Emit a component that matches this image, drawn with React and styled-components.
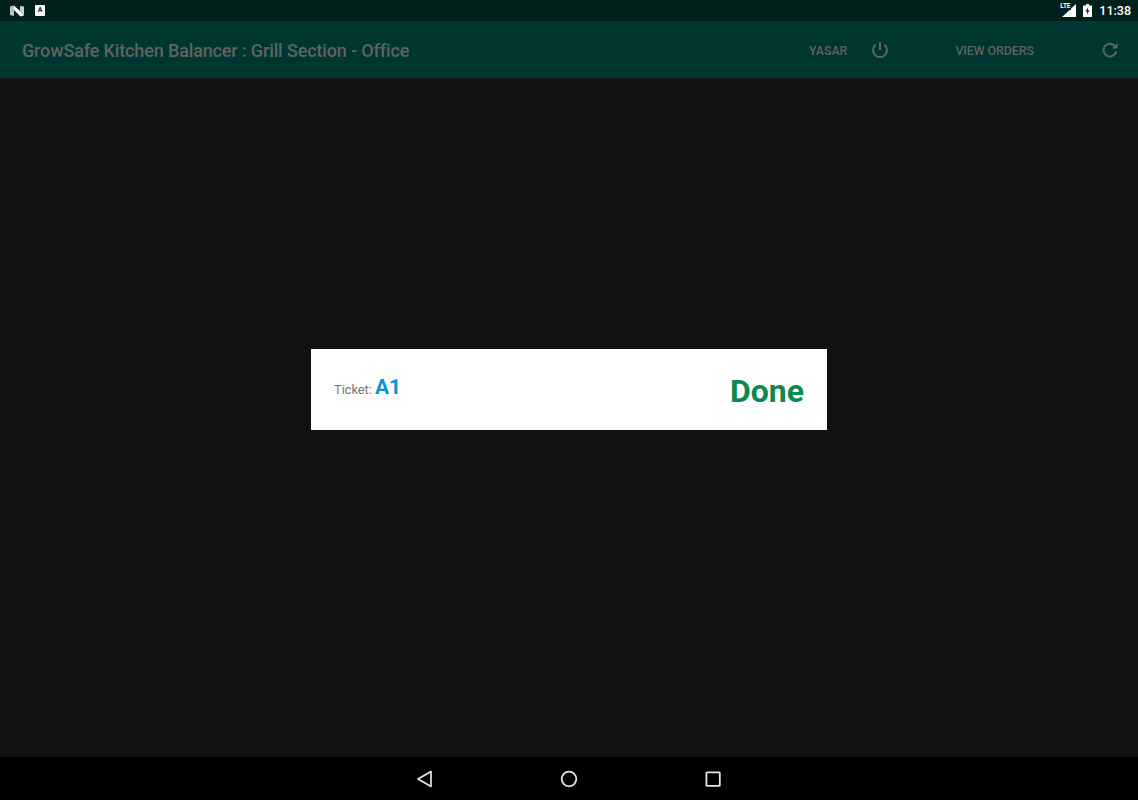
import React from "react";
import styled, { createGlobalStyle } from "styled-components";

const GlobalStyle = createGlobalStyle`
  html, body {
    margin: 0;
    padding: 0;
    height: 100%;
    background: #111111;
  }
  #root {
    height: 100%;
  }
`;

const App = () => {
  return (
    <>
      <GlobalStyle />
      <Screen>
        <StatusBar>
          <StatusIcons>
            <svg width="14" height="12" viewBox="0 0 14 12">
              <path d="M0 1.5 L4 0.5 L4 11 L0 10 Z" fill="#b9c2bf" />
              <path d="M4 0.5 L10 6 L14 10.5 L10.5 11.5 L4 5 Z" fill="#ffffff" />
              <path d="M10 1 L14 1.5 L14 10.5 L10 6 Z" fill="#c9d0ce" />
            </svg>
            <NotifyBadge>A</NotifyBadge>
          </StatusIcons>
          <StatusIcons>
            <SignalWrap>
              <LteTag>LTE</LteTag>
              <svg width="14" height="13" viewBox="0 0 14 13">
                <path d="M14 0 V13 H0 Z" fill="#ffffff" />
              </svg>
            </SignalWrap>
            <svg width="9" height="13" viewBox="0 0 9 13">
              <path d="M3 0 H6 V1.5 H9 V13 H0 V1.5 H3 Z" fill="#ffffff" />
              <path d="M5.2 3 L2.5 7.6 H4.2 L3.6 11 L6.5 6.2 H4.7 Z" fill="#00211b" />
            </svg>
            <Clock>11:38</Clock>
          </StatusIcons>
        </StatusBar>
        <AppBar>
          <Title>GrowSafe Kitchen Balancer : Grill Section - Office</Title>
          <Actions>
            <ActionLabel>YASAR</ActionLabel>
            <PowerButton>
              <svg width="18" height="18" viewBox="0 0 18 18" fill="none" stroke="#5f6362" strokeWidth="1.9">
                <path d="M9 1 V9" />
                <path d="M4.7 3.6 A7 7 0 1 0 13.3 3.6" />
              </svg>
            </PowerButton>
            <ViewOrders>VIEW ORDERS</ViewOrders>
            <RefreshButton>
              <svg width="16" height="16" viewBox="0 0 16 16" fill="none">
                <path d="M13.1 4.2 A6.4 6.4 0 1 0 14.3 9.2" stroke="#5f6362" strokeWidth="2" />
                <path d="M15.6 0.8 V6.6 H9.8 Z" fill="#5f6362" />
              </svg>
            </RefreshButton>
          </Actions>
        </AppBar>
        <Content />
        <NavBar>
          <svg width="18" height="18" viewBox="0 0 18 18" fill="none" stroke="#e6e6e6" strokeWidth="1.7" strokeLinejoin="round">
            <path d="M15 1.5 V16.5 L2 9 Z" />
          </svg>
          <svg width="18" height="18" viewBox="0 0 18 18" fill="none" stroke="#e6e6e6" strokeWidth="1.8">
            <circle cx="9" cy="9" r="7.3" />
          </svg>
          <svg width="18" height="18" viewBox="0 0 18 18" fill="none" stroke="#e6e6e6" strokeWidth="1.8">
            <rect x="2.4" y="2.4" width="13.4" height="13.4" rx="0.6" />
          </svg>
        </NavBar>
        <DialogLayer>
          <Dialog>
            <TicketInfo>
              <TicketLabel>Ticket:</TicketLabel>
              <TicketNumber>A1</TicketNumber>
            </TicketInfo>
            <Status>Done</Status>
          </Dialog>
        </DialogLayer>
      </Screen>
    </>
  );
};

export default App;

const Screen = styled.div`
  position: relative;
  display: flex;
  flex-direction: column;
  height: 800px;
  overflow: hidden;
  background-color: #111111;
  font-family: Roboto, "Liberation Sans", sans-serif;
`;

const StatusBar = styled.div`
  flex: 0 0 21px;
  display: flex;
  justify-content: space-between;
  align-items: center;
  padding: 0 7px 0 10px;
  background-color: #00211b;
`;

const StatusIcons = styled.div`
  display: flex;
  align-items: center;
  gap: 7px;
`;

const NotifyBadge = styled.div`
  width: 10px;
  height: 11px;
  margin-left: 4px;
  border-radius: 1px;
  background-color: #ffffff;
  color: #00211b;
  font-size: 7px;
  font-weight: 700;
  line-height: 10px;
  text-align: center;
`;

const SignalWrap = styled.div`
  position: relative;
  display: flex;
`;

const LteTag = styled.span`
  position: absolute;
  left: -2px;
  top: -1px;
  color: #ffffff;
  font-size: 6.5px;
  font-weight: 700;
  line-height: 7px;
  letter-spacing: -0.2px;
  background-color: #00211b;
  padding-right: 1px;
`;

const Clock = styled.span`
  color: #ffffff;
  font-size: 12.5px;
  font-weight: 500;
`;

const AppBar = styled.div`
  flex: 0 0 57px;
  display: flex;
  justify-content: space-between;
  align-items: center;
  padding: 0 20px 0 22px;
  background-color: #003630;
`;

const Title = styled.div`
  margin-top: 2px;
  color: #5f6362;
  font-size: 18px;
  font-weight: 500;
  letter-spacing: -0.14px;
`;

const Actions = styled.div`
  display: flex;
  align-items: center;
`;

const ActionLabel = styled.span`
  margin-top: 2px;
  color: #5f6362;
  font-size: 12.3px;
  font-weight: 500;
`;

const PowerButton = styled.div`
  display: flex;
  margin-left: 24px;
`;

const ViewOrders = styled(ActionLabel)`
  margin-left: 66px;
`;

const RefreshButton = styled.div`
  display: flex;
  margin-left: 68px;
`;

const Content = styled.div`
  flex: 1;
  background-color: #111111;
`;

const NavBar = styled.div`
  flex: 0 0 43px;
  display: flex;
  justify-content: center;
  align-items: center;
  gap: 126px;
  background-color: #000000;
`;

const DialogLayer = styled.div`
  position: absolute;
  top: 21px;
  left: 0;
  right: 0;
  bottom: 43px;
  display: flex;
  justify-content: center;
  align-items: center;
`;

const Dialog = styled.div`
  box-sizing: border-box;
  width: 516px;
  height: 81px;
  display: flex;
  justify-content: space-between;
  align-items: center;
  padding: 0 23px;
  background-color: #ffffff;
`;

const TicketInfo = styled.div`
  display: flex;
  align-items: baseline;
  gap: 3px;
  margin-top: -4px;
`;

const TicketLabel = styled.span`
  color: #757575;
  font-size: 12.8px;
`;

const TicketNumber = styled.span`
  color: #0a93d4;
  font-size: 21px;
  font-weight: 700;
`;

const Status = styled.div`
  margin-top: 3px;
  color: #0a8a4e;
  font-size: 32px;
  font-weight: 700;
`;
